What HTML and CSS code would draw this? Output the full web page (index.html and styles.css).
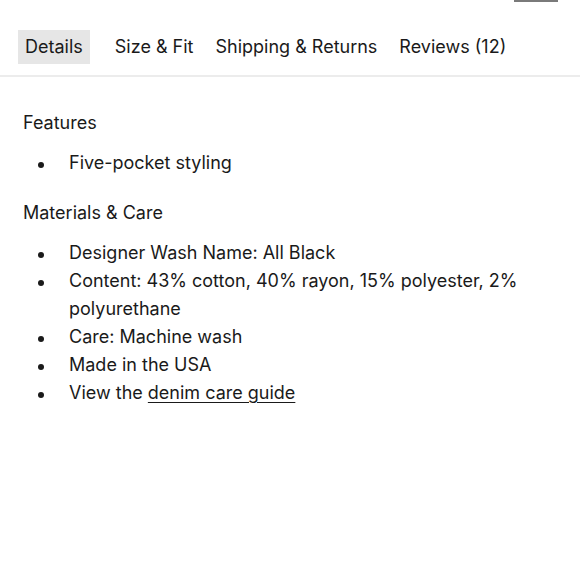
FILE: index.html
```html
<!DOCTYPE html>
<html>
<head>
<meta charset="utf-8">
<link rel="stylesheet" href="styles.css">
</head>
<body>
<div class="topmark"></div>
<nav class="tabs">
  <span class="tab active">Details</span>
  <span class="tab">Size &amp; Fit</span>
  <span class="tab">Shipping &amp; Returns</span>
  <span class="tab">Reviews (12)</span>
</nav>
<main class="content">
  <h3 class="heading">Features</h3>
  <ul class="list">
    <li>Five-pocket styling</li>
  </ul>
  <h3 class="heading">Materials &amp; Care</h3>
  <ul class="list">
    <li>Designer Wash Name: All Black</li>
    <li>Content: 43% cotton, 40% rayon, 15% polyester, 2% polyurethane</li>
    <li>Care: Machine wash</li>
    <li>Made in the USA</li>
    <li>View the <a class="link" href="#">denim care guide</a></li>
  </ul>
</main>
</body>
</html>
```
FILE: styles.css
```css
* { box-sizing: border-box; }
html, body { margin: 0; padding: 0; background: #fff; }
body {
  font-family: "Inter", "Lato", sans-serif;
  color: #1a1a1a;
  font-size: 18px;
  width: 580px;
  height: 580px;
  overflow: hidden;
}
.topmark {
  height: 2px;
  width: 44px;
  background: #7a7a7a;
  margin-left: 514px;
}
.tabs {
  display: flex;
  align-items: center;
  gap: 8px;
  padding: 28px 0 11px 18px;
  border-bottom: 2px solid #ececec;
}
.tab {
  padding: 6px 7px;
  line-height: 22px;
  white-space: nowrap;
}
.active { background: #e6e6e6; margin-right: 10px; }
.content { padding: 32px 22px 0 23px; }
.heading {
  font-weight: 400;
  font-size: 18px;
  line-height: 28px;
  margin: 0 0 12px;
}
.list {
  list-style: none;
  margin: 0 0 22px;
  padding: 0 0 0 46px;
}
.list li {
  position: relative;
  line-height: 28px;
}
.list li::before {
  content: "";
  position: absolute;
  left: -31px;
  top: 13px;
  width: 6px;
  height: 6px;
  border-radius: 50%;
  background: #1a1a1a;
}
.link { color: inherit; text-decoration: underline; text-underline-offset: 3px; }
```
